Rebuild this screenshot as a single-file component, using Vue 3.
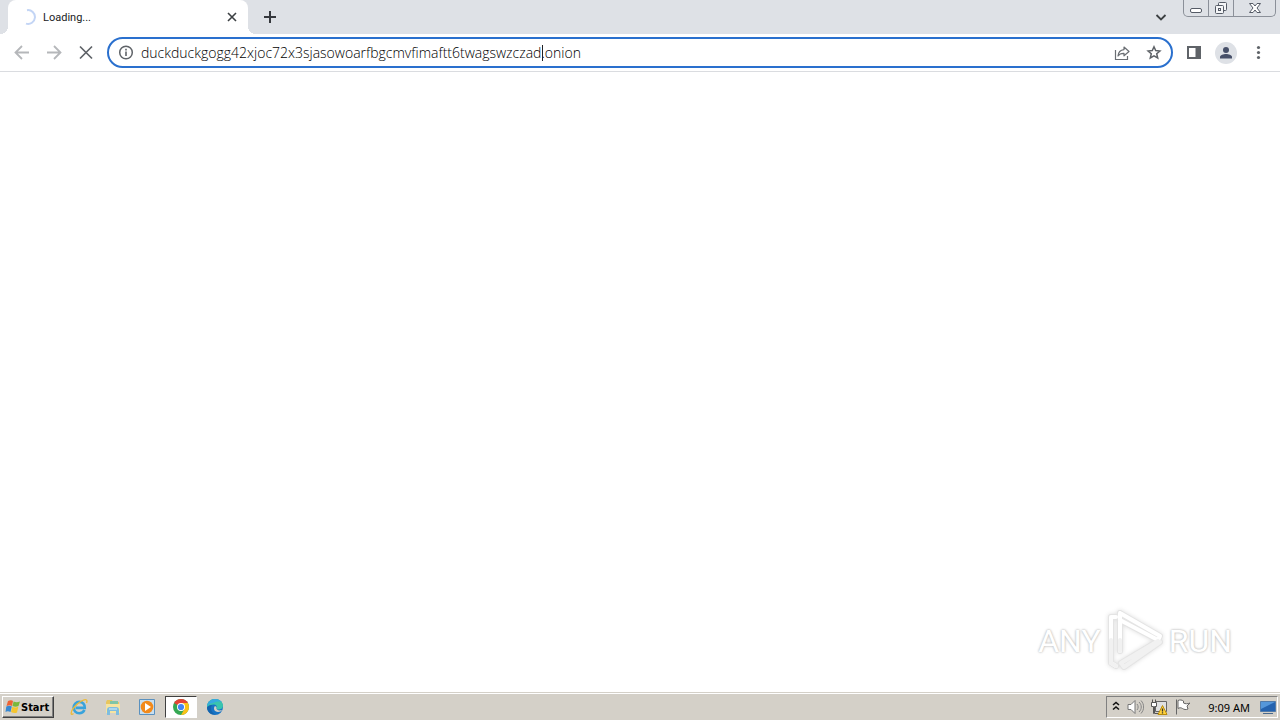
<script setup>
import { ref } from 'vue'

const address = ref('duckduckgogg42xjoc72x3sjasowoarfbgcmvfimaftt6twagswzczad.onion')
</script>

<template>
  <div class="desktop">
    <header class="tabstrip">
      <div class="tab">
        <svg class="spinner" width="16" height="16" viewBox="0 0 16 16" fill="none"><path d="M7 1.2A6.9 6.9 0 1 1 6 14.6" stroke="#c3d5f5" stroke-width="2" /></svg>
        <span class="tab-title">Loading...</span>
        <button class="plain tab-close" aria-label="Close tab">
          <svg width="16" height="16" viewBox="0 0 16 16"><path d="M4 4l8 8M12 4l-8 8" stroke="#3c4043" stroke-width="1.6" /></svg>
        </button>
      </div>
      <button class="plain new-tab" aria-label="New tab">
        <svg width="16" height="16" viewBox="0 0 16 16"><path d="M8 2v12M2 8h12" stroke="#35383d" stroke-width="2" /></svg>
      </button>
      <button class="plain search-tabs" aria-label="Search tabs">
        <svg width="16" height="16" viewBox="0 0 16 16" fill="none"><path d="M3.500 6L8 10.500 12.500 6" stroke="#3c4043" stroke-width="1.800" /></svg>
      </button>
      <div class="window-controls">
        <button class="plain" aria-label="Minimize">
          <svg width="14" height="14" viewBox="0 0 14 14"><rect x="1.500" y="7.500" width="11" height="4" rx="1.500" fill="#fff" stroke="#555b66" /></svg>
        </button>
        <button class="plain" aria-label="Restore">
          <svg width="14" height="14" viewBox="0 0 14 14" fill="#f4f5f7" stroke="#555b66"><rect x="4.500" y="1.500" width="8" height="8" rx="1" /><rect x="1.500" y="4.500" width="8" height="8" rx="1" /><rect x="4.500" y="7.500" width="2" height="2" /></svg>
        </button>
        <button class="plain wide" aria-label="Close">
          <svg width="14" height="14" viewBox="0 0 14 14"><path d="M1.500 2.500h3.500l2 2.500 2-2.500h3.500L9 7l3.500 4.500H9L7 9l-2 2.500H1.500L5 7z" fill="#fff" stroke="#555b66" /></svg>
        </button>
      </div>
    </header>

    <nav class="toolbar" aria-label="Navigation">
      <button class="plain" aria-label="Back">
        <svg width="20" height="20" viewBox="0 0 20 20" fill="none" stroke="#b5b7ba" stroke-width="1.800"><path d="M17 9.500H4M10 3L3.500 9.500 10 16" /></svg>
      </button>
      <button class="plain" aria-label="Forward">
        <svg width="20" height="20" viewBox="0 0 20 20" fill="none" stroke="#b5b7ba" stroke-width="1.800"><path d="M3 9.500h13M10 3l6.500 6.500L10 16" /></svg>
      </button>
      <button class="plain" aria-label="Stop">
        <svg width="20" height="20" viewBox="0 0 20 20"><path d="M4 3.500l12 12M16 3.500l-12 12" stroke="#5f6368" stroke-width="1.700" /></svg>
      </button>
      <div class="omnibox">
        <button class="plain info" aria-label="Site information">
          <svg width="16" height="16" viewBox="0 0 16 16"><circle cx="8" cy="7.500" r="6.300" fill="none" stroke="#5f6368" stroke-width="1.500" /><path d="M8 6.500V11M8 3.800v1.600" stroke="#5f6368" stroke-width="1.600" /></svg>
        </button>
        <div class="address-field">
          <input v-model="address" class="address" type="text" aria-label="Address" spellcheck="false" />
          <i class="caret"></i>
        </div>
        <button class="plain omni-action" aria-label="Share">
          <svg width="16" height="16" viewBox="0 0 16 16" fill="none" stroke="#6a6e73" stroke-width="1.200"><path d="M1.500 5v9.500h12V11" /><path d="M10 2l5 4.500-5 4.300V8.300C7.200 8.200 5.300 9 4 11c.3-3.800 2.500-6 6-6.400z" stroke-linejoin="round" /></svg>
        </button>
        <button class="plain omni-action" aria-label="Bookmark">
          <svg width="16" height="16" viewBox="0 0 16 16" fill="none" stroke="#5f6368" stroke-width="1.500"><path d="M8 1.800l1.700 3.800 4.200.4-3.200 2.800 1 4.100L8 10.800l-3.700 2.100 1-4.100L2.100 6l4.200-.4z" /></svg>
        </button>
      </div>
      <button class="plain" aria-label="Side panel">
        <svg width="16" height="16" viewBox="0 0 16 16"><path d="M1 1h14v13H1z" fill="#5f6368" /><path d="M3 3h6.500v9H3z" fill="#fff" /></svg>
      </button>
      <button class="plain avatar" aria-label="Profile">
        <svg width="22" height="22" viewBox="0 0 22 22"><circle cx="11" cy="11" r="11" fill="#dee1e6" /><circle cx="11" cy="8" r="3" fill="#475069" /><path d="M5 16.500V15c0-2 3.500-3 6-3s6 1 6 3v1.500z" fill="#475069" /></svg>
      </button>
      <button class="plain" aria-label="Menu">
        <svg width="16" height="16" viewBox="0 0 16 16" fill="#5f6368"><circle cx="8.500" cy="2.500" r="1.600" /><circle cx="8.500" cy="7.500" r="1.600" /><circle cx="8.500" cy="12.500" r="1.600" /></svg>
      </button>
    </nav>

    <main class="page">
      <div class="watermark">
        <span class="mark-text">ANY</span>
        <svg class="mark-logo" width="60" height="66" viewBox="0 0 60 66" fill="none">
          <g stroke-linejoin="round" stroke-linecap="round">
            <path d="M11 9H6v46l5 3M15 5v38M15 5l40 23-2 4-38-20M55 34L19 59l-3-4 37-22" stroke="#e4e4e4" stroke-width="6" />
            <path d="M11 9H6v46l5 3M15 5v38M15 5l40 23-2 4-38-20" stroke="#fff" stroke-width="4" />
            <path d="M6 32v23l5 3M15 32v11M55 34L19 59l-3-4 37-22" stroke="#f1f1f1" stroke-width="4" />
          </g>
        </svg>
        <span class="mark-text">RUN</span>
      </div>
    </main>

    <footer class="taskbar">
      <button class="start">
        <svg width="16" height="16" viewBox="0 0 16 16"><path d="M3 2c2-1 4-1 5 0L7 7C5.500 6 4 6 1.500 7z" fill="#ed6335" /><path d="M8.600 2.500c2 1 4 1 6.400 0L13.500 7c-2 1-4 1-6 0z" fill="#79b83c" /><path d="M1.300 7.500c2-1 4-1 5.500 0L5.500 13c-2-1-3.500-1-5 0z" fill="#3688d2" /><path d="M7.300 7.800c2 1 4 1 6 0L12 13.500c-2 1-4 .5-6-.5z" fill="#f5c52f" /></svg>
        <span>Start</span>
      </button>
      <div class="launchers">
        <button class="plain launcher" aria-label="Internet Explorer">
          <svg width="18" height="18" viewBox="0 0 18 18" fill="none"><path d="M14.500 12c-1 2-3 3.200-5.200 3.200-3.300 0-5.700-2.500-5.700-5.600s2.500-5.700 5.700-5.700c3.500 0 5.700 2.500 5.500 6H5.500" stroke="#38a3dc" stroke-width="2.600" /><path d="M3.500 15.500C.5 18 0 14 4 9.500 8 4.500 14.500.5 16.500 2c.8.7.5 1.800 0 3" stroke="#edba36" stroke-width="1.300" /></svg>
        </button>
        <button class="plain launcher" aria-label="Explorer">
          <svg width="18" height="18" viewBox="0 0 18 18"><path d="M2 4l1-2h5l1 2h6v10H2z" fill="#e8c65e" /><path d="M6 3h8v4H6z" fill="#7fc5a6" /><path d="M2 6h14v9H2z" fill="#f6e4a0" /><path d="M3 17v-5c0-2 1-3 3-3h6c2 0 3 1 3 3v5h-3v-4H6v4z" fill="#7fbddf" /><path d="M5 11h8" stroke="#d8f0fa" /></svg>
        </button>
        <button class="plain launcher" aria-label="Media Player">
          <svg width="18" height="18" viewBox="0 0 18 18"><path d="M1.500 1.500h15v15h-15z" fill="#c8dff0" stroke="#5a91bf" /><circle cx="9" cy="9" r="6.300" fill="#f28a1b" /><path d="M7 5l6 4-6 4z" fill="#fff" /></svg>
        </button>
        <button class="plain launcher active" aria-label="Chrome">
          <svg width="18" height="18" viewBox="0 0 18 18"><circle cx="9" cy="9" r="8" fill="#35a853" /><path d="M9 9L2.100 5A8 8 0 0 1 15.900 5z" fill="#e54335" /><path d="M9 5h6.900A8 8 0 0 1 9 17l3.500-6z" fill="#fbc116" /><circle cx="9" cy="9" r="4" fill="#fff" /><circle cx="9" cy="9" r="3.100" fill="#4285f4" /></svg>
        </button>
        <button class="plain launcher" aria-label="Edge">
          <svg width="18" height="18" viewBox="0 0 18 18"><circle cx="9" cy="9" r="8" fill="#1673c5" /><path d="M1 9C1 3.500 5 1 9 1c5 0 8 3.500 8 6.500 0 3-2.500 4-4.500 4-1.500 0-2.500-.7-2-1.500C12 7 7 4.500 1 9z" fill="#39c4ae" /><path d="M1 8c1-5 5-7 8-7 3.500 0 6 2 7 3-4-1-7 0-9 1-2 0-4 1-6 3z" fill="#36a9e0" /><path d="M9 8c-2 2-1 6 3 6 2 0 3.500-1 4-2-2 .8-4 .5-5-.5S10.500 10 10.500 9z" fill="#d4d0c8" /><path d="M6 7c-2 3-1 7 3 9.500C4 17 1 13 1 9.500 2 8 4 7 6 7z" fill="#1464ad" /></svg>
        </button>
      </div>
      <div class="tray">
        <button class="plain tray-item narrow" aria-label="Show hidden icons">
          <svg width="8" height="12" viewBox="0 0 8 12" fill="none" stroke="#111" stroke-width="1.600"><path d="M1 4L4 1.500 7 4M1 8.500L4 6l3 2.500" /></svg>
        </button>
        <button class="plain tray-item" aria-label="Volume">
          <svg width="18" height="18" viewBox="0 0 18 18" fill="none"><path d="M2 6.500h3l4-4v13l-4-4H2z" fill="#fff" stroke="#777" /><path d="M11 6c1.500 2 1.500 4 0 6M13 4c3 3 3 7 0 10M15 2.500c3.500 4 3.500 9 0 13" stroke="#858585" /></svg>
        </button>
        <button class="plain tray-item" aria-label="Network">
          <svg width="18" height="18" viewBox="0 0 18 18"><path d="M5.500 3.500h11v10h-11z" fill="#dfe0e1" stroke="#666" /><path d="M1.500 4.500h5v4h-2v7h-1v-7h-2z" fill="#fff" stroke="#555" /><path d="M2.500 4.500v-3M5.500 4.500v-3M5 15.500h4" stroke="#555" /><path d="M12.500 7.500l4.500 9H8z" fill="#ffd23c" stroke="#b88b0c" /><path d="M12.500 10.500v3M12.500 14.200v1.300" stroke="#333" stroke-width="1.300" /></svg>
        </button>
        <button class="plain tray-item" aria-label="Action Center">
          <svg width="18" height="18" viewBox="0 0 18 18"><path d="M2.500 1.500v15M4 2.500c2-1 4-.5 5.500.5v2c2 1 4 1 6.500 0l-3 3 1 3c-2 1-4 .5-5.500-.5-1.500-1-3-1-4.500 0z" fill="#fff" stroke="#666" /></svg>
        </button>
        <time class="clock">9:09 AM</time>
        <button class="plain tray-item" aria-label="Show desktop">
          <svg width="18" height="18" viewBox="0 0 18 18"><path d="M1.500 3.500h15v10h-15z" fill="#2563af" stroke="#527ba9" /><path d="M2 4h14L2 11z" fill="#5597da" /><path d="M4 15.500h10" stroke="#49698c" /></svg>
        </button>
      </div>
    </footer>
  </div>
</template>

<style>
body {
  margin: 0;
}
</style>

<style scoped>
.desktop {
  display: flex;
  flex-direction: column;
  min-height: 100vh;
  background: #fff;
  color: #202124;
  font-family: "Noto Sans", "Open Sans", sans-serif;
}

.plain {
  display: flex;
  align-items: center;
  justify-content: center;
  padding: 0;
  border: 0;
  background: none;
}

svg {
  display: block;
  flex: none;
}

.tabstrip {
  display: flex;
  align-items: flex-start;
  height: 34px;
  padding: 0 4px 0 8px;
  background: #dee1e6;
}

.tab {
  position: relative;
  display: flex;
  align-items: center;
  box-sizing: border-box;
  width: 240px;
  height: 34px;
  padding: 0 8px 0 12px;
  border-radius: 8px 8px 0 0;
  background: #fff;
}

.tab::before,
.tab::after {
  content: "";
  position: absolute;
  bottom: 0;
  width: 8px;
  height: 8px;
}

.tab::before {
  right: 100%;
  background: radial-gradient(circle at 0 0, #dee1e6 8px, #fff 8px);
}

.tab::after {
  left: 100%;
  background: radial-gradient(circle at 100% 0, #dee1e6 8px, #fff 8px);
}

.tab-title {
  flex: 1;
  margin-left: 7px;
  font-family: Roboto, sans-serif;
  font-size: 11px;
}

.new-tab {
  width: 28px;
  height: 34px;
  margin-left: 8px;
}

.search-tabs {
  height: 34px;
  margin-left: auto;
}

.window-controls {
  display: flex;
  margin-left: 14px;
  border: 1px solid #8b9099;
  border-top: 0;
  border-radius: 0 0 5px 5px;
}

.window-controls button {
  width: 25px;
  height: 16px;
  border-right: 1px solid #8b9099;
}

.window-controls .wide {
  width: 41px;
  border-right: 0;
}

.toolbar {
  display: flex;
  align-items: center;
  gap: 12px;
  height: 37px;
  padding: 0 14px 0 12px;
  border-bottom: 1px solid #dadce0;
}

.omnibox {
  display: flex;
  flex: 1;
  align-items: center;
  box-sizing: border-box;
  min-width: 0;
  height: 31px;
  margin: 0 1px 0 -1px;
  padding: 0 9px;
  border: 2px solid #2a70ce;
  border-radius: 16px;
}

.address-field {
  position: relative;
  flex: 1;
  min-width: 0;
  margin-left: 7px;
}

.address {
  display: block;
  width: 100%;
  height: 24px;
  padding: 0;
  border: 0;
  outline: 0;
  background: none;
  color: #000;
  font-family: "Open Sans", "Noto Sans", sans-serif;
  font-size: 14px;
  font-weight: 300;
}

.caret {
  position: absolute;
  top: 4px;
  left: 401px;
  width: 1px;
  height: 16px;
  background: #202124;
}

.omni-action {
  margin-left: 16px;
}

.avatar {
  margin: 0 1px;
}

.page {
  display: flex;
  flex: 1;
  align-items: flex-end;
  justify-content: flex-end;
  padding: 0 48px 19px;
}

.watermark {
  display: flex;
  align-items: center;
  gap: 4px;
}

.mark-text {
  color: #fff;
  font-family: Roboto, sans-serif;
  font-size: 32px;
  line-height: 66px;
  text-shadow: 0 0 2px #bbb, 0 0 3px #ccc;
}

.mark-logo {
  filter: drop-shadow(0 0 2px #ddd);
}

.taskbar {
  display: flex;
  align-items: center;
  height: 26px;
  padding: 0 2px;
  border-top: 1px solid #fff;
  background: #d4d0c8;
  box-shadow: 0 -1px #d4d0c8;
}

.start {
  display: flex;
  align-items: center;
  box-sizing: border-box;
  height: 22px;
  padding: 0 4px 0 2px;
  border: 1px solid;
  border-color: #fff #404040 #404040 #fff;
  box-shadow: inset -1px -1px #808080;
  background: #d4d0c8;
  color: #000;
  font-family: "DejaVu Sans Condensed", "DejaVu Sans", sans-serif;
  font-size: 11px;
  font-weight: 700;
}

.launchers {
  display: flex;
  gap: 2px;
  margin-left: 9px;
}

.launcher {
  box-sizing: border-box;
  width: 32px;
  height: 22px;
}

.launcher.active {
  border: 1px solid;
  border-color: #404040 #fff #fff #404040;
  background: #fff;
}

.tray {
  display: flex;
  align-items: center;
  box-sizing: border-box;
  height: 22px;
  margin-left: auto;
  border: 1px solid;
  border-color: #808080 #fff #fff #808080;
}

.tray-item {
  width: 18px;
  margin-left: 6px;
}

.narrow {
  width: 8px;
  margin-left: 5px;
}

.clock {
  margin: 0 3px 0 16px;
  color: #000;
  font-size: 11px;
}
</style>
